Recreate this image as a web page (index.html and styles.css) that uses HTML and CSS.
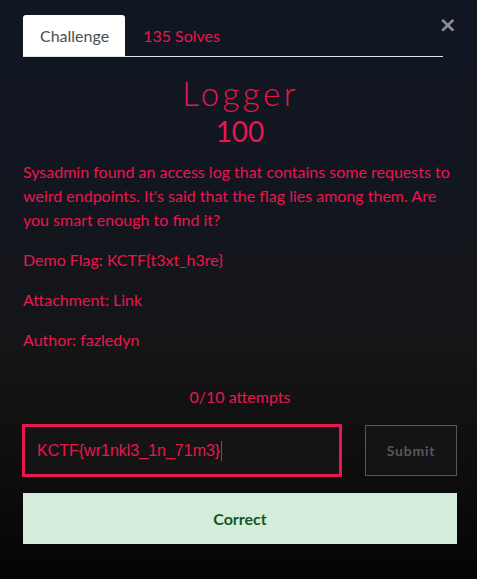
FILE: index.html
```html
<!DOCTYPE html>
<html>
<head>
<meta charset="utf-8">
<link rel="stylesheet" href="styles.css">
</head>
<body>
<div class="modal">
  <div class="close">&times;</div>
  <div class="tabs">
    <div class="tab active">Challenge</div>
    <div class="tab">135 Solves</div>
  </div>
  <h1 class="title">Logger</h1>
  <div class="points">100</div>
  <div class="desc">
    <p>Sysadmin found an access log that contains some requests to weird endpoints. It's said that the flag lies among them. Are you smart enough to find it?</p>
    <p>Demo Flag: KCTF{t3xt_h3re}</p>
    <p>Attachment: Link</p>
    <p>Author: fazledyn</p>
  </div>
  <div class="attempts">0/10 attempts</div>
  <div class="submit-row">
    <div class="flag-input">KCTF{wr1nkl3_1n_71m3}<span class="caret"></span></div>
    <div class="submit-btn">Submit</div>
  </div>
  <div class="result">Correct</div>
</div>
</body>
</html>
```
FILE: styles.css
```css
html, body {
  margin: 0;
  padding: 0;
  height: 100%;
}
body {
  background: linear-gradient(180deg, #101622 0%, #121620 30%, #151517 60%, #0c0c0c 85%, #040404 100%);
  font-family: Lato, "Noto Sans", sans-serif;
  color: #e8174f;
}
.modal {
  position: relative;
  padding: 15px 20px 0 23px;
}
.close {
  position: absolute;
  top: 14px;
  right: 20px;
  font-size: 22px;
  font-weight: 700;
  color: #8a8e96;
  line-height: 22px;
  font-family: "DejaVu Sans", sans-serif;
}
.tabs {
  display: flex;
  width: 420px;
  border-bottom: 1px solid #e8e8ec;
}
.tab {
  font-size: 16px;
  line-height: 20px;
  padding: 11px 18px 10px 18px;
  color: #e8174f;
}
.tab.active {
  background: #fff;
  color: #4a4d52;
  border-radius: 3px 3px 0 0;
  padding: 11px 16px 10px 17px;
}
.title {
  margin: 16px 0 0 0;
  text-align: center;
  font-weight: 300;
  font-size: 33px;
  letter-spacing: 3.5px;
  line-height: 40px;
  padding-left: 1px;
}
.points {
  text-align: center;
  font-size: 28px;
  line-height: 32px;
  margin-top: 2px;
}
.desc p {
  margin: 0 0 16px 0;
  font-size: 16px;
  line-height: 24px;
  width: 434px;
}
.desc p:first-child {
  margin-top: 13px;
}
.attempts {
  text-align: center;
  font-size: 16px;
  margin-top: 35px;
  line-height: 20px;
  width: 434px;
}
.submit-row {
  display: flex;
  gap: 23px;
  margin-top: 17px;
  width: 434px;
  align-items: flex-start;
}
.flag-input {
  box-sizing: border-box;
  width: 320px;
  height: 53px;
  margin-left: -1px;
  border: 3px solid #e8174f;
  background: #151414;
  font-family: "Liberation Sans", Arial, sans-serif;
  font-size: 16px;
  padding: 0 0 0 12px;
  display: flex;
  align-items: center;
}
.caret {
  display: inline-block;
  width: 1px;
  height: 20px;
  background: #e8174f;
  margin-left: 1px;
}
.submit-btn {
  box-sizing: border-box;
  width: 92px;
  height: 51px;
  margin-top: 1px;
  border: 1px solid #55575a;
  color: #55575a;
  font-weight: 700;
  font-size: 14px;
  letter-spacing: 0.8px;
  display: flex;
  align-items: center;
  justify-content: center;
  background: #151414;
}
.result {
  margin-top: 16px;
  width: 434px;
  height: 51px;
  background: #d4edda;
  color: #155724;
  font-weight: 700;
  font-size: 16px;
  display: flex;
  align-items: center;
  justify-content: center;
}
```
